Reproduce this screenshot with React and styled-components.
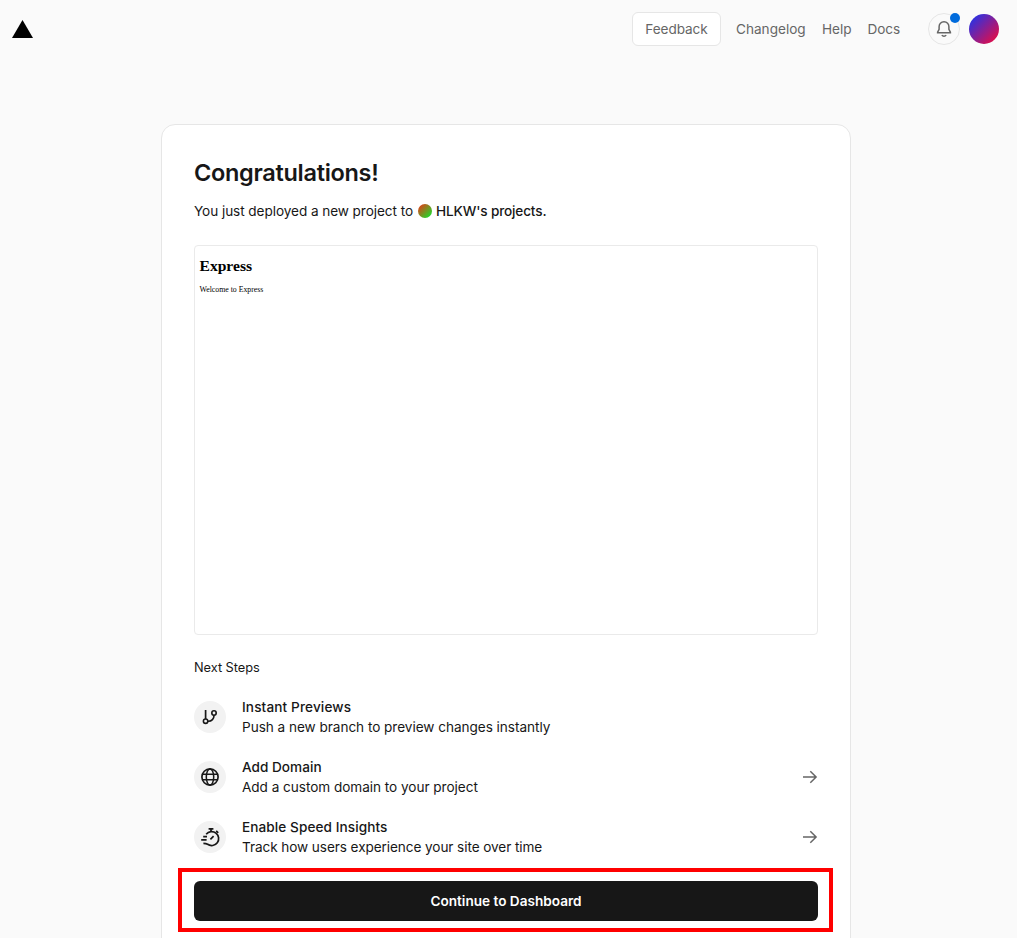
import React from "react";
import styled, { createGlobalStyle } from "styled-components";

const GlobalStyle = createGlobalStyle`
  * { box-sizing: border-box; }
  body { margin: 0; background: #fafafa; font-family: Inter, "Liberation Sans", sans-serif; color: #171717; }
  h1, h2, p { margin: 0; }
`;

const Page = styled.div`
  height: 938px;
  overflow: hidden;
  display: flex;
  flex-direction: column;
`;

const Header = styled.header`
  height: 58px;
  flex: none;
  display: flex;
  align-items: center;
  padding: 0 18px 0 12px;
`;

const Logo = styled.svg`
  display: block;
  margin-right: auto;
`;

const FeedbackButton = styled.button`
  width: 89px;
  height: 34px;
  padding: 0;
  margin-right: 15px;
  border: 1px solid #e6e6e6;
  border-radius: 6px;
  background: #fff;
  color: #666;
  font: 400 13.6px/20px Inter, sans-serif;
  letter-spacing: -0.07px;
  white-space: nowrap;
`;

const Nav = styled.nav`
  display: flex;
  gap: 16px;
  margin-right: 28px;
`;

const NavLink = styled.a`
  width: ${(p) => p.$width}px;
  font-size: 13.6px;
  line-height: 20px;
  letter-spacing: ${(p) => p.$spacing || 0}px;
  color: #666;
  white-space: nowrap;
`;

const BellButton = styled.button`
  position: relative;
  width: 32px;
  height: 32px;
  padding: 0;
  margin-right: 9px;
  display: flex;
  align-items: center;
  justify-content: center;
  border: 1px solid #e6e6e6;
  border-radius: 50%;
  background: transparent;
  color: #666;
`;

const Dot = styled.span`
  position: absolute;
  top: -1px;
  right: -1px;
  width: 10px;
  height: 10px;
  border-radius: 50%;
  background: #006bdc;
`;

const Avatar = styled.span`
  width: 30px;
  height: 30px;
  border-radius: 50%;
  background: linear-gradient(135deg, #1b35f0 5%, #f00a3c 95%);
`;

const Card = styled.main`
  width: 690px;
  height: 900px;
  flex: none;
  margin: 66px 0 0 161px;
  padding: 32px;
  border: 1px solid #e6e6e6;
  border-radius: 14px 14px 0 0;
  background: #fff;
`;

const Title = styled.h1`
  font-size: 23.5px;
  line-height: 32px;
  font-weight: 600;
  letter-spacing: ${(p) => p.$spacing}px;
  white-space: nowrap;
`;

const Summary = styled.p`
  display: flex;
  align-items: center;
  margin-top: 12px;
  font-size: 13.6px;
  line-height: 20px;
  white-space: nowrap;
`;

const Phrase = styled.span`
  width: 224px;
  letter-spacing: ${(p) => p.$spacing}px;
`;

const TeamAvatar = styled.span`
  width: 14px;
  height: 14px;
  margin-right: 4px;
  border-radius: 50%;
  background: linear-gradient(135deg, #dc4218 10%, #1bdc2c 90%);
`;

const TeamName = styled.span`
  font-weight: 500;
  letter-spacing: ${(p) => p.$spacing}px;
`;

const Preview = styled.section`
  height: 390px;
  margin-top: 24px;
  padding: 11px 4.5px;
  border: 1px solid #eaeaea;
  border-radius: 4px;
  color: #000;
  font-family: "Liberation Serif", "Times New Roman", serif;
`;

const PreviewTitle = styled.h2`
  font-size: 15.6px;
  line-height: 18px;
  font-weight: 700;
`;

const PreviewText = styled.p`
  margin-top: 10px;
  font-size: 7.8px;
  line-height: 10px;
`;

const StepsLabel = styled.p`
  margin-top: 23px;
  font-size: 12.8px;
  line-height: 20px;
  letter-spacing: ${(p) => p.$spacing}px;
`;

const Steps = styled.div`
  display: flex;
  flex-direction: column;
  gap: 20px;
  margin-top: 19px;
`;

const Step = styled.div`
  display: flex;
  align-items: center;
  height: 40px;
`;

const StepIcon = styled.span`
  width: 32px;
  height: 32px;
  margin-right: 16px;
  display: flex;
  align-items: center;
  justify-content: center;
  border-radius: 50%;
  background: #f2f2f2;
`;

const StepBody = styled.div`
  flex: 1;
  font-size: 13.6px;
  line-height: 20px;
  white-space: nowrap;
`;

const StepLine = styled.p`
  font-weight: ${(p) => (p.$strong ? 500 : 400)};
  letter-spacing: ${(p) => p.$spacing}px;
`;

const Action = styled.div`
  position: relative;
  margin-top: 24px;
`;

const Highlight = styled.span`
  position: absolute;
  inset: -13px -15px -11px -16px;
  border: 4px solid #f00;
  pointer-events: none;
`;

const ContinueButton = styled.button`
  display: block;
  width: 100%;
  height: 40px;
  padding: 0;
  border: 0;
  border-radius: 6px;
  background: #171717;
  color: #fff;
  font: 600 13.6px/20px Inter, sans-serif;
`;

const Icon = ({ size = 16, children }) => (
  <svg width={size} height={size} viewBox="0 0 16 16" fill="none" stroke="currentColor" strokeWidth="1.5">
    {children}
  </svg>
);

const BranchIcon = () => (
  <Icon>
    <path d="M3.6 1V10.2" strokeWidth="1.7" />
    <circle cx="3.6" cy="12.2" r="2.2" strokeWidth="1.6" />
    <circle cx="12" cy="4" r="2.2" strokeWidth="1.6" />
    <path d="M12 6.2V6.8C12 9.7 9.7 12.2 6.5 12.2H5.8" strokeWidth="1.6" />
  </Icon>
);

const GlobeIcon = () => (
  <Icon size={18}>
    <circle cx="8" cy="8" r="7.2" strokeWidth="1.5" />
    <ellipse cx="8" cy="8" rx="3.3" ry="7.2" strokeWidth="1.35" />
    <path d="M1.3 5.6H14.7M1.3 10.5H14.7" strokeWidth="1.35" />
  </Icon>
);

const SpeedIcon = () => (
  <svg width="20" height="20" viewBox="0 0 20 20" fill="none" stroke="currentColor" strokeWidth="1.7">
    <path d="M6.2 7.2A7 7 0 1 1 7.6 17.3C6.5 16.6 5.5 16.3 3.4 16.3" />
    <path d="M8.6 1.9H13.4M11 1.9V4.6M16.2 3.8L18.2 5.8M10.4 12.4L13.6 9.2M3.2 9.6H7M1.2 12.9H6.6" />
  </svg>
);

const Arrow = () => (
  <svg width="16" height="16" viewBox="0 0 16 16" fill="none" stroke="#666" strokeWidth="1.5">
    <path d="M1 8H14.2M8.3 2.2L14.1 8L8.3 13.8" />
  </svg>
);

const BellIcon = () => (
  <Icon>
    <path d="M8 .8C5 .8 3.1 3 3.1 5.7V8.4L1.6 11.2V11.8H14.4V11.2L12.9 8.4V5.7C12.9 3 11 .8 8 .8Z" />
    <path d="M5.8 14.1C6.9 15.5 9.1 15.5 10.2 14.1" />
  </Icon>
);

const steps = [
  { title: "Instant Previews", text: "Push a new branch to preview changes instantly", icon: BranchIcon, ts: 0.13, xs: -0.04 },
  { title: "Add Domain", text: "Add a custom domain to your project", icon: GlobeIcon, ts: 0.02, xs: -0.04, link: true },
  { title: "Enable Speed Insights", text: "Track how users experience your site over time", icon: SpeedIcon, ts: 0.08, xs: -0.085, link: true },
];

export default function App() {
  return (
    <Page>
      <GlobalStyle />
      <Header>
        <Logo width="21" height="18" viewBox="0 0 21 18">
          <path d="M10.5 0L21 18H0Z" fill="#000" />
        </Logo>
        <FeedbackButton>Feedback</FeedbackButton>
        <Nav>
          <NavLink $width={70}>Changelog</NavLink>
          <NavLink $width={29.5}>Help</NavLink>
          <NavLink $width={32.5} $spacing={-0.1}>Docs</NavLink>
        </Nav>
        <BellButton aria-label="Notifications">
          <BellIcon />
          <Dot />
        </BellButton>
        <Avatar />
      </Header>
      <Card>
        <Title $spacing={-0.3}>Congratulations!</Title>
        <Summary>
          <Phrase $spacing={-0.07}>You just deployed a new project to</Phrase>
          <TeamAvatar />
          <TeamName $spacing={-0.15}>HLKW's projects.</TeamName>
        </Summary>
        <Preview>
          <PreviewTitle>Express</PreviewTitle>
          <PreviewText>Welcome to Express</PreviewText>
        </Preview>
        <StepsLabel $spacing={-0.05}>Next Steps</StepsLabel>
        <Steps>
          {steps.map(({ title, text, icon: Glyph, ts, xs, link }) => (
            <Step key={title}>
              <StepIcon><Glyph /></StepIcon>
              <StepBody>
                <StepLine $strong $spacing={ts}>{title}</StepLine>
                <StepLine $spacing={xs}>{text}</StepLine>
              </StepBody>
              {link && <Arrow />}
            </Step>
          ))}
        </Steps>
        <Action>
          <ContinueButton>Continue to Dashboard</ContinueButton>
          <Highlight />
        </Action>
      </Card>
    </Page>
  );
}
